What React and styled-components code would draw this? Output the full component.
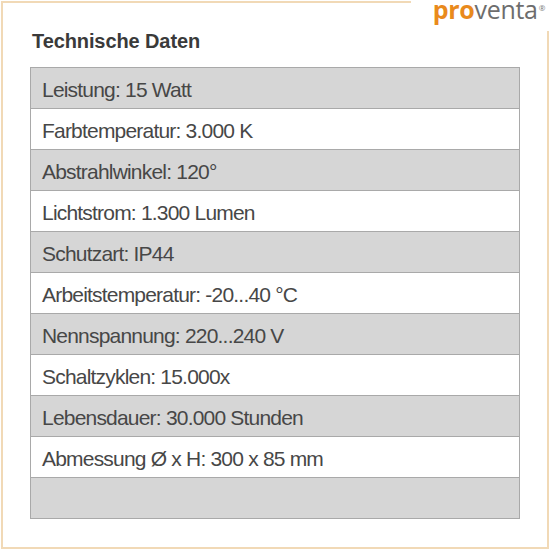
import React from "react";
import styled, { createGlobalStyle } from "styled-components";

const specs = [
  "Leistung: 15 Watt",
  "Farbtemperatur: 3.000 K",
  "Abstrahlwinkel: 120°",
  "Lichtstrom: 1.300 Lumen",
  "Schutzart: IP44",
  "Arbeitstemperatur: -20...40 °C",
  "Nennspannung: 220...240 V",
  "Schaltzyklen: 15.000x",
  "Lebensdauer: 30.000 Stunden",
  "Abmessung Ø x H: 300 x 85 mm",
  "",
];

const App = () => {
  return (
    <>
      <GlobalStyle />
      <Page>
        <Header>
          <TopLine />
          <Logo>
            <Pro>pro</Pro>
            <Venta>venta</Venta>
            <Reg>®</Reg>
          </Logo>
        </Header>
        <Frame>
          <Title>Technische Daten</Title>
          <Table>
            {specs.map((s, i) => (
              <Row key={i} $shaded={i % 2 === 0}>
                {s}
              </Row>
            ))}
          </Table>
        </Frame>
      </Page>
    </>
  );
};

export default App;

const GlobalStyle = createGlobalStyle`
  body {
    margin: 0;
    background: #fff;
    font-family: "Liberation Sans", Arial, sans-serif;
  }
`;

const Page = styled.div`
  width: 550px;
  height: 550px;
  display: flex;
  flex-direction: column;
  box-sizing: border-box;
  padding: 1px;
`;

const Header = styled.div`
  display: flex;
  align-items: flex-start;
  height: 30px;
`;

const TopLine = styled.div`
  flex: 1;
  height: 100%;
  border-top: 2px solid #f1d9b6;
  border-left: 2px solid #f1d9b6;
  margin-right: 22px;
`;

const Logo = styled.div`
  display: flex;
  align-items: flex-start;
  font-family: "Open Sans", "Liberation Sans", sans-serif;
  font-size: 25px;
  line-height: 25px;
  margin-top: -4px;
  margin-right: 4px;
  letter-spacing: -0.3px;
`;

const Pro = styled.span`
  color: #e98a1c;
  font-weight: 700;
`;

const Venta = styled.span`
  color: #6d6d6d;
  font-weight: 400;
`;

const Reg = styled.span`
  color: #777;
  font-size: 8px;
  line-height: 8px;
  margin-top: 7px;
  margin-left: 1px;
`;

const Frame = styled.div`
  flex: 1;
  border-left: 2px solid #f1d9b6;
  border-right: 2px solid #f1d9b6;
  border-bottom: 2px solid #f1d9b6;
  padding: 0 27px;
`;

const Title = styled.div`
  color: #3a3a3a;
  font-size: 20px;
  font-weight: 700;
  padding-left: 2px;
  height: 36px;
  line-height: 20px;
  letter-spacing: -0.1px;
`;

const Table = styled.div`
  border: 1px solid #a9a9a9;
  display: flex;
  flex-direction: column;
`;

const Row = styled.div`
  height: 41px;
  box-sizing: border-box;
  background: ${(p) => (p.$shaded ? "#d6d6d6" : "#ffffff")};
  border-top: 1px solid #a9a9a9;
  &:first-child {
    border-top: none;
    height: 40px;
  }
  color: #474747;
  font-size: 21px;
  letter-spacing: -0.8px;
  padding: 4px 0 0 11px;
  display: flex;
  align-items: center;
`;
